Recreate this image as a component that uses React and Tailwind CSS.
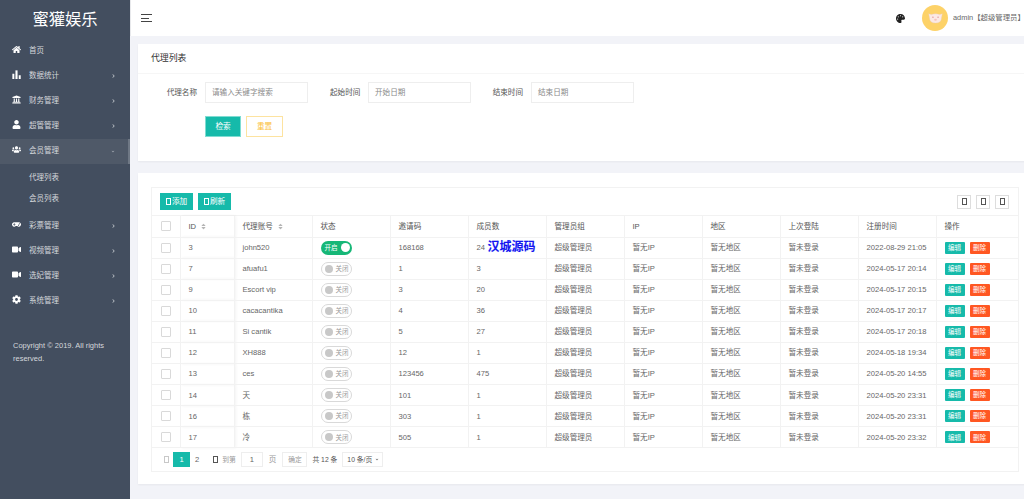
import React from "react";
import { FaHome, FaUniversity, FaUser, FaUsers, FaGamepad, FaVideo, FaCog, FaPalette, FaSort, FaChevronRight, FaChevronDown } from "react-icons/fa";

function BarsIcon({ className }) {
  return (
    <svg viewBox="0 0 12 12" className={className} fill="currentColor">
      <rect x="0.5" y="5" width="2.6" height="7" />
      <rect x="4.6" y="0.5" width="2.8" height="11.5" />
      <rect x="9" y="7" width="2.6" height="5" />
    </svg>
  );
}

const menu = [
  { name: "首页", icon: FaHome },
  { name: "数据统计", icon: BarsIcon, arrow: true },
  { name: "财务管理", icon: FaUniversity, arrow: true },
  { name: "超管管理", icon: FaUser, arrow: true },
  { name: "会员管理", icon: FaUsers, open: true, children: ["代理列表", "会员列表"] },
  { name: "彩票管理", icon: FaGamepad, arrow: true },
  { name: "视频管理", icon: FaVideo, arrow: true },
  { name: "选妃管理", icon: FaVideo, arrow: true },
  { name: "系统管理", icon: FaCog, arrow: true },
];

const rows = [
  ["3", "john520", true, "168168", "24", "2022-08-29 21:05"],
  ["7", "afuafu1", false, "1", "3", "2024-05-17 20:14"],
  ["9", "Escort vip", false, "3", "20", "2024-05-17 20:15"],
  ["10", "cacacantika", false, "4", "36", "2024-05-17 20:17"],
  ["11", "Si cantik", false, "5", "27", "2024-05-17 20:18"],
  ["12", "XH888", false, "12", "1", "2024-05-18 19:34"],
  ["13", "ces", false, "123456", "475", "2024-05-20 14:55"],
  ["14", "天", false, "101", "1", "2024-05-20 23:31"],
  ["16", "栋", false, "303", "1", "2024-05-20 23:31"],
  ["17", "冷", false, "505", "1", "2024-05-20 23:32"],
];

function Tofu({ className = "border-current" }) {
  return <span className={`inline-block w-[5px] h-[7px] border-[0.75px] ${className}`} />;
}

function Sidebar() {
  return (
    <aside className="w-[130px] shrink-0 h-full bg-[#434e5f] text-[#d5d8dc] text-[7.5px]">
      <div className="h-[38.5px] flex items-center justify-center text-white text-[16.3px]">蜜獾娱乐</div>
      {menu.map((item) => {
        const Icon = item.icon;
        return (
          <div key={item.name}>
            <div className={`h-[25px] flex items-center pl-[12px] pr-[15px] ${item.open ? "bg-[#4f5968] border-r-2 border-[#6f7885]" : ""}`}>
              <span className="w-[17px] -mt-[3px]">
                <Icon className="w-[9px] h-[9px] text-white" />
              </span>
              <span className="flex-1">{item.name}</span>
              {item.arrow && <FaChevronRight className="w-[3px] h-[4px] text-[#c5c9cf]" />}
              {item.open && <FaChevronDown className="w-[4px] h-[3px] mr-[-2px] text-[#c5c9cf]" />}
            </div>
            {item.children && (
              <div className="py-[4px]">
                {item.children.map((c) => (
                  <div key={c} className="h-[21px] flex items-center pl-[29px]">{c}</div>
                ))}
              </div>
            )}
          </div>
        );
      })}
      <p className="mt-[25px] px-[13px] leading-[13.5px]">Copyright © 2019. All rights reserved.</p>
    </aside>
  );
}

function Header() {
  return (
    <header className="h-[36px] bg-white flex items-center pl-[10px] border-l border-[#e8e9ec]">
      <div className="flex flex-col gap-[2.5px]">
        <span className="w-[11px] h-px bg-[#444]" />
        <span className="w-[8px] h-px bg-[#444]" />
        <span className="w-[11px] h-px bg-[#444]" />
      </div>
      <div className="ml-auto flex items-center text-[7.4px] text-[#666] whitespace-nowrap w-[128px] shrink-0">
        <FaPalette className="w-[9px] h-[9px] shrink-0 text-[#222]" />
        <div className="ml-[17px] w-[26px] h-[26px] rounded-full bg-[#fdd268] flex items-center justify-center shrink-0">
          <svg viewBox="0 0 20 16" className="w-[17px] h-[14px]">
            <path d="M2 3 L5 4 Q10 2 15 4 L18 3 L17 8 Q17 14 10 14 Q3 14 3 8 Z" fill="#fbe9e4" stroke="#e8c9bf" strokeWidth="0.4" />
            <circle cx="7" cy="7" r="0.7" fill="#d77" />
            <circle cx="13" cy="7" r="0.7" fill="#d77" />
            <ellipse cx="10" cy="10" rx="1.6" ry="1.2" fill="#f6c3bb" />
          </svg>
        </div>
        <span className="ml-[5px]">admin【超级管理员】</span>
      </div>
    </header>
  );
}

function Field({ label, placeholder, labelWidth }) {
  return (
    <div className="flex items-center">
      <label className={`${labelWidth} text-right mr-[8px] text-[#555] whitespace-nowrap`}>{label}</label>
      <div className="w-[103px] h-[21px] border border-[#eeeeee] flex items-center pl-[6px] text-[#8a8a8a]">{placeholder}</div>
    </div>
  );
}

function SearchCard() {
  return (
    <section className="w-[894px] h-[117px] bg-white shadow-[0_1px_2px_rgba(0,0,0,0.05)]">
      <h2 className="h-[30px] flex items-center pl-[13px] text-[8.9px] text-[#333] border-b border-[#f6f6f6]">代理列表</h2>
      <div className="pt-[8px] text-[7.6px]">
        <div className="flex pl-[13px]">
          <Field label="代理名称" placeholder="请输入关键字搜索" labelWidth="w-[46px]" />
          <div className="ml-[22px]"><Field label="起始时间" placeholder="开始日期" labelWidth="w-[30px]" /></div>
          <div className="ml-[21px]"><Field label="结束时间" placeholder="结束日期" labelWidth="w-[31px]" /></div>
        </div>
        <div className="flex gap-[5px] pl-[67px] mt-[13px]">
          <button className="w-[36px] h-[21px] bg-[#16baaa] border border-[#7fdcd2] text-white">检索</button>
          <button className="w-[37px] h-[21px] bg-white border border-[#fde3a0] text-[#fbbf3c]">重置</button>
        </div>
      </div>
    </section>
  );
}

function Switch({ on }) {
  if (on) {
    return (
      <span className="w-[31px] h-[14px] rounded-full bg-[#16b777] flex items-center justify-between pl-[4px] pr-[2px] text-white text-[6.5px]">
        开启
        <span className="w-[9px] h-[9px] rounded-full bg-white" />
      </span>
    );
  }
  return (
    <span className="w-[31px] h-[14px] rounded-full border border-[#d9d9d9] flex items-center gap-[3px] pl-[3px] text-[#999] text-[6.5px]">
      <span className="w-[8px] h-[8px] rounded-full bg-[#c8c8c8]" />
      关闭
    </span>
  );
}

function Check() {
  return <span className="block w-[10px] h-[10px] mx-auto border border-[#d9d9d9] rounded-[1px] bg-white" />;
}

function Sort() {
  return <FaSort className="inline-block ml-[5px] w-[5px] h-[7px] text-[#b5b5b5] align-[-1px]" />;
}

const thClass = "text-left font-normal pl-[8px] border-r border-[#f2f2f2] text-[#555]";
const tdClass = "pl-[8px] border-r border-[#f2f2f2] whitespace-nowrap";

function DataTable() {
  return (
    <table className="w-[866px] table-fixed border-collapse text-[7.6px] text-[#666]">
      <colgroup>
        <col className="w-[28px]" />
        <col className="w-[54px]" />
        <col className="w-[78px]" />
        <col className="w-[78px]" />
        <col className="w-[78px]" />
        <col className="w-[78px]" />
        <col className="w-[78px]" />
        <col className="w-[78px]" />
        <col className="w-[78px]" />
        <col className="w-[78px]" />
        <col className="w-[78px]" />
        <col />
      </colgroup>
      <thead>
        <tr className="h-[21px] border-b border-[#f2f2f2]">
          <th className="border-r border-[#f2f2f2]"><Check /></th>
          <th className={`${thClass} shadow-[2px_0_3px_rgba(0,0,0,0.05)]`}>ID<Sort /></th>
          <th className={thClass}>代理账号<Sort /></th>
          {["状态", "邀请码", "成员数", "管理员组", "IP", "地区", "上次登陆", "注册时间"].map((h) => (
            <th key={h} className={thClass}>{h}</th>
          ))}
          <th className="text-left font-normal pl-[8px] text-[#555]">操作</th>
        </tr>
      </thead>
      <tbody>
        {rows.map((r, i) => (
          <tr key={r[0]} className="h-[21.1px] border-b border-[#f2f2f2]">
            <td className="border-r border-[#f2f2f2]"><Check /></td>
            <td className={`${tdClass} shadow-[2px_0_3px_rgba(0,0,0,0.05)]`}>{r[0]}</td>
            <td className={tdClass}>{r[1]}</td>
            <td className={tdClass}><Switch on={r[2]} /></td>
            <td className={tdClass}>{r[3]}</td>
            <td className={`${tdClass} relative`}>
              {r[4]}
              {i === 0 && (
                <span className="absolute left-[19px] top-0 text-[12px] font-bold text-[#1414f0] [text-shadow:0_0_1px_#cfe0ff]">汉城源码</span>
              )}
            </td>
            <td className={tdClass}>超级管理员</td>
            <td className={tdClass}>暂无IP</td>
            <td className={tdClass}>暂无地区</td>
            <td className={tdClass}>暂未登录</td>
            <td className={tdClass}>{r[5]}</td>
            <td className="pl-[8px]">
              <div className="flex gap-[5px]">
                <span className="w-[20px] h-[12px] flex items-center justify-center bg-[#16baaa] text-white text-[6.5px] rounded-[1px]">编辑</span>
                <span className="w-[20px] h-[12px] flex items-center justify-center bg-[#ff5722] text-white text-[6.5px] rounded-[1px]">删除</span>
              </div>
            </td>
          </tr>
        ))}
      </tbody>
    </table>
  );
}

function Pagination() {
  return (
    <div className="h-[23px] flex items-center pl-[12px] text-[7.6px] text-[#666] whitespace-nowrap">
      <Tofu className="border-[#c8c8c8]" />
      <span className="ml-[4px] w-[17px] h-[15px] bg-[#16baaa] text-white flex items-center justify-center">1</span>
      <span className="ml-[5px]">2</span>
      <span className="ml-[14px] flex"><Tofu className="border-[#555]" /></span>
      <span className="ml-[4px] text-[#999] text-[6.8px]">到第</span>
      <span className="ml-[5px] w-[22px] h-[15px] border border-[#eeeeee] flex items-center justify-center">1</span>
      <span className="ml-[6px] text-[#999]">页</span>
      <span className="ml-[6px] w-[25px] h-[15px] border border-[#eeeeee] flex items-center justify-center text-[#999] text-[6.8px]">确定</span>
      <span className="ml-[5px] text-[#555] text-[6.8px]">共 12 条</span>
      <span className="ml-[5px] w-[41px] h-[15px] border border-[#eeeeee] flex items-center justify-between pl-[4px] pr-[3px] text-[#555] text-[6.8px]">
        10 条/页
        <FaChevronDown className="w-[4px] h-[3px] text-[#333]" />
      </span>
    </div>
  );
}

function TableCard() {
  return (
    <section className="w-[894px] h-[311px] mt-[12px] bg-white px-[13px] pt-[14px] shadow-[0_1px_2px_rgba(0,0,0,0.05)]">
      <div className="w-[868px] border border-[#f2f2f2]">
        <div className="h-[28px] flex items-center pl-[8px] pr-[9px] border-b border-[#f2f2f2]">
          <button className="w-[33px] h-[17px] bg-[#16baaa] text-white text-[7.6px] flex items-center justify-center gap-[1px]"><Tofu />添加</button>
          <button className="ml-[5px] w-[33px] h-[17px] bg-[#16baaa] text-white text-[7.6px] flex items-center justify-center gap-[1px]"><Tofu />刷新</button>
          <div className="ml-auto flex gap-[5px]">
            {[0, 1, 2].map((n) => (
              <span key={n} className="w-[14px] h-[14px] border border-[#dddddd] flex items-center justify-center"><Tofu className="border-[#555]" /></span>
            ))}
          </div>
        </div>
        <DataTable />
        <Pagination />
      </div>
    </section>
  );
}

export default function App() {
  return (
    <div className="w-[1024px] h-[499px] flex overflow-hidden bg-[#f2f3f8] font-['Liberation_Sans','Noto_Sans_CJK_SC',sans-serif]">
      <Sidebar />
      <main className="flex-1 min-w-0 overflow-hidden">
        <Header />
        <div className="pl-[8px] pt-[8px]">
          <SearchCard />
          <TableCard />
        </div>
      </main>
    </div>
  );
}
